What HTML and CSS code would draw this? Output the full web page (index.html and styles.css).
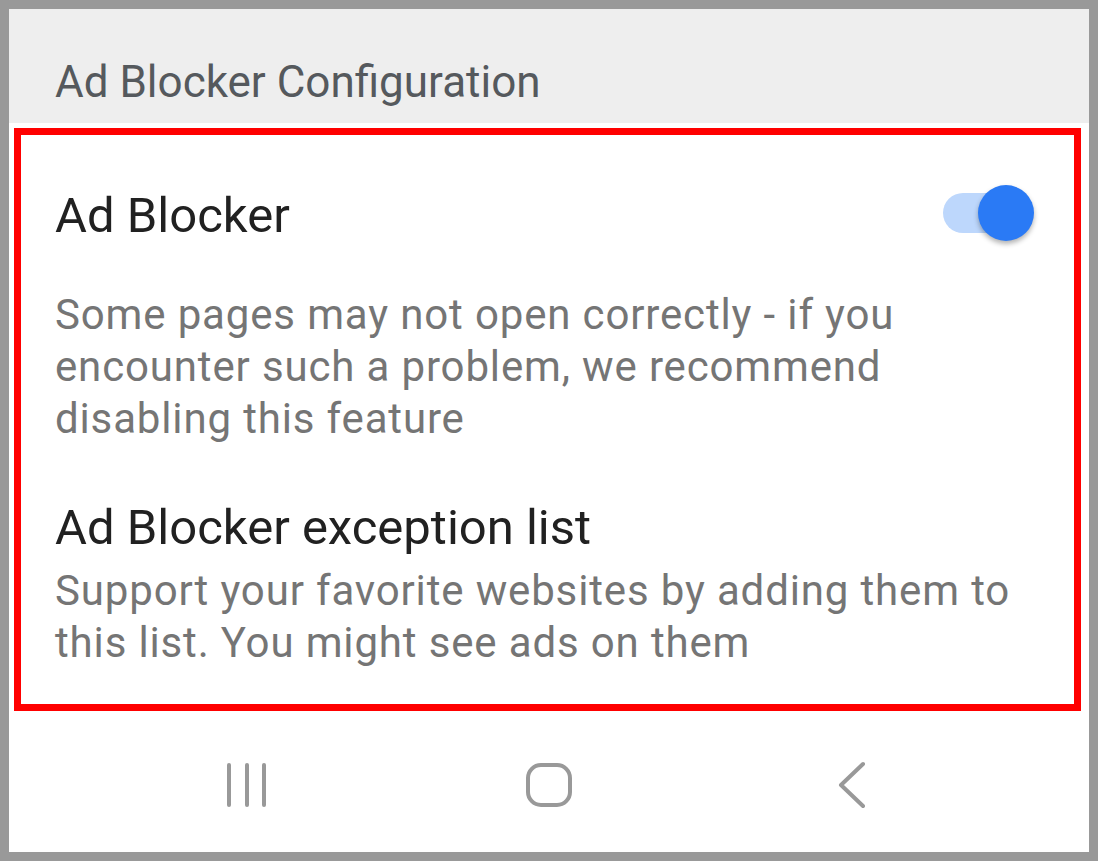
FILE: index.html
```html
<!DOCTYPE html>
<html lang="en">
<head>
<meta charset="utf-8">
<title>Ad Blocker Configuration</title>
<link rel="stylesheet" href="styles.css">
</head>
<body>
<div class="frame">
  <header class="appbar">
    <h1 class="appbar-title">Ad Blocker Configuration</h1>
  </header>
  <section class="panel">
    <div class="row">
      <h2 class="item-title">Ad Blocker</h2>
      <div class="switch" role="switch" aria-checked="true">
        <span class="switch-track"></span>
        <span class="switch-thumb"></span>
      </div>
    </div>
    <p class="item-desc desc-main">Some pages may not open correctly - if you encounter such a problem, we recommend disabling this feature</p>
    <h2 class="item-title title-second">Ad Blocker exception list</h2>
    <p class="item-desc desc-second">Support your favorite websites by adding them to this list. You might see ads on them</p>
  </section>
  <nav class="navbar">
    <span class="nav-btn">
      <svg width="48" height="48" viewBox="0 0 48 48" aria-hidden="true">
        <g stroke="#999" stroke-width="4" stroke-linecap="round" fill="none">
          <line x1="6" y1="4" x2="6" y2="44"/>
          <line x1="24" y1="4" x2="24" y2="44"/>
          <line x1="41" y1="4" x2="41" y2="44"/>
        </g>
      </svg>
    </span>
    <span class="nav-btn">
      <svg width="48" height="48" viewBox="0 0 48 48" aria-hidden="true">
        <rect x="3" y="4" width="42" height="40" rx="13" ry="13" fill="none" stroke="#999" stroke-width="4"/>
      </svg>
    </span>
    <span class="nav-btn">
      <svg width="48" height="48" viewBox="0 0 48 48" aria-hidden="true">
        <polyline points="36,3 14,24 36,45" fill="none" stroke="#999" stroke-width="4" stroke-linecap="round" stroke-linejoin="round"/>
      </svg>
    </span>
  </nav>
</div>
</body>
</html>
```

FILE: styles.css
```css
* { box-sizing: border-box; }
html, body { margin: 0; padding: 0; }
body {
  font-family: Roboto, "Noto Sans", "Liberation Sans", sans-serif;
  background: #999999;
}
.frame {
  width: 1098px;
  height: 861px;
  border: 9px solid #999999;
  background: #ffffff;
  display: flex;
  flex-direction: column;
}
.appbar {
  height: 114px;
  background: #eeeeee;
  padding: 50px 0 0 46px;
  flex: none;
}
.appbar-title {
  margin: 0;
  font-size: 44px;
  line-height: 46px;
  font-weight: 400;
  color: #55595d;
}
.panel {
  margin: 5px 8px 0 5px;
  height: 583px;
  border: 7px solid #ff0000;
  padding: 54px 40px 0 34px;
  flex: none;
}
.row {
  display: flex;
  align-items: center;
  justify-content: space-between;
}
.item-title {
  margin: 0;
  font-size: 49px;
  line-height: 54px;
  font-weight: 400;
  color: #212121;
}
.item-desc {
  margin: 0;
  font-size: 42px;
  line-height: 52px;
  letter-spacing: 0.85px;
  color: #757575;
}
.desc-main { margin-top: 46px; }
.title-second { margin-top: 56px; }
.desc-second { margin-top: 10px; }
.switch {
  position: relative;
  width: 92px;
  height: 56px;
  margin-top: -6px;
  flex: none;
}
.switch-track {
  position: absolute;
  left: 1px;
  top: 8px;
  width: 84px;
  height: 40px;
  border-radius: 20px;
  background: #bdd7fc;
}
.switch-thumb {
  position: absolute;
  right: 0;
  top: 0;
  width: 56px;
  height: 56px;
  border-radius: 50%;
  background: #2a7af5;
  box-shadow: 0 3px 5px rgba(0, 0, 0, 0.3);
}
.navbar {
  flex: 1;
  display: flex;
  justify-content: center;
  align-items: center;
  gap: 254px;
  padding-top: 7px;
}
.nav-btn {
  display: flex;
  width: 48px;
  height: 48px;
}
```
